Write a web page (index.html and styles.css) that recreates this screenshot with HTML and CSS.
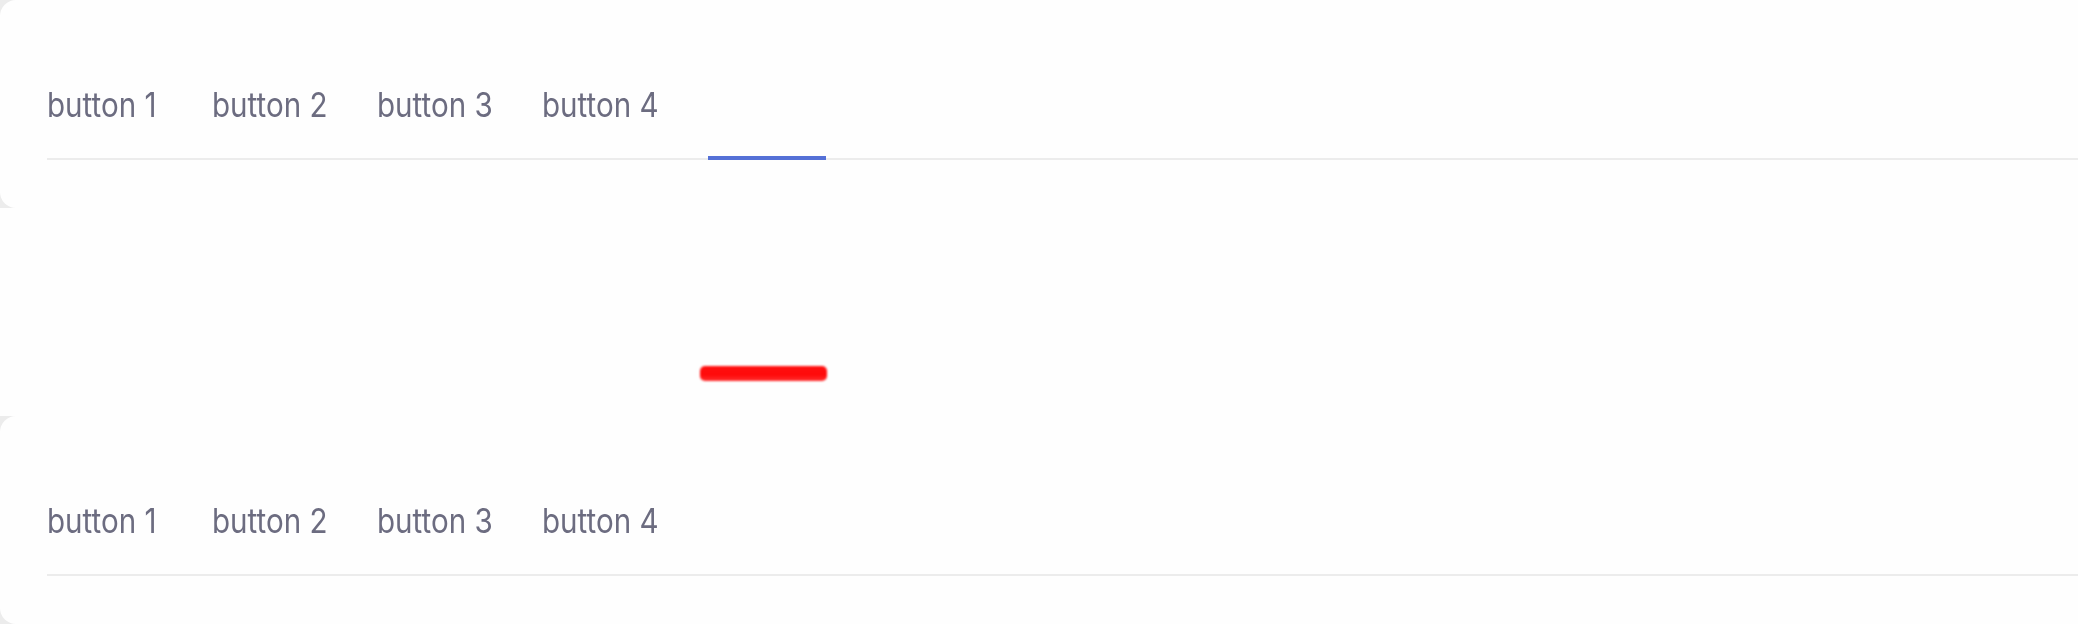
FILE: index.html
```html
<!DOCTYPE html>
<html lang="en">
<head>
<meta charset="utf-8">
<title>Tabs</title>
<link rel="stylesheet" href="styles.css">
</head>
<body>
  <section class="card">
    <div class="tabs">
      <div class="tab"><span class="tab-label">button 1</span></div>
      <div class="tab"><span class="tab-label">button 2</span></div>
      <div class="tab"><span class="tab-label">button 3</span></div>
      <div class="tab"><span class="tab-label">button 4</span></div>
      <span class="indicator"></span>
    </div>
  </section>
  <section class="gap-section">
    <div class="red-bar"></div>
  </section>
  <section class="card">
    <div class="tabs">
      <div class="tab"><span class="tab-label">button 1</span></div>
      <div class="tab"><span class="tab-label">button 2</span></div>
      <div class="tab"><span class="tab-label">button 3</span></div>
      <div class="tab"><span class="tab-label">button 4</span></div>
    </div>
  </section>
</body>
</html>
```

FILE: styles.css
```css
html, body {
  margin: 0;
  padding: 0;
}
body {
  background: #ececec;
  width: 2078px;
  height: 624px;
  overflow: hidden;
  font-family: Inter, "Noto Sans", sans-serif;
}
.card {
  background: #fefefe;
  height: 208px;
  box-sizing: border-box;
  padding-left: 47px;
  border-radius: 16px 0 0 16px;
}
.tabs {
  position: relative;
  display: flex;
  padding-top: 85px;
  border-bottom: 2px solid #ececec;
}
.tab {
  width: 165px;
  flex: none;
  line-height: 40px;
  padding-bottom: 33px;
  font-size: 34px;
  color: #6c6c80;
  white-space: nowrap;
}
.tab-label {
  display: inline-block;
  transform: scaleX(0.87);
  transform-origin: left center;
}
.indicator {
  position: absolute;
  left: 661px;
  bottom: -2px;
  width: 118px;
  height: 4px;
  background: #5470d6;
}
.gap-section {
  background: #fefefe;
  height: 208px;
  padding-top: 158px;
  box-sizing: border-box;
}
.red-bar {
  margin-left: 700px;
  width: 127px;
  height: 15px;
  border-radius: 5px;
  background: linear-gradient(#ff1010, #ff0a0a 60%, #ff3030);
  filter: blur(0.8px);
}
```
